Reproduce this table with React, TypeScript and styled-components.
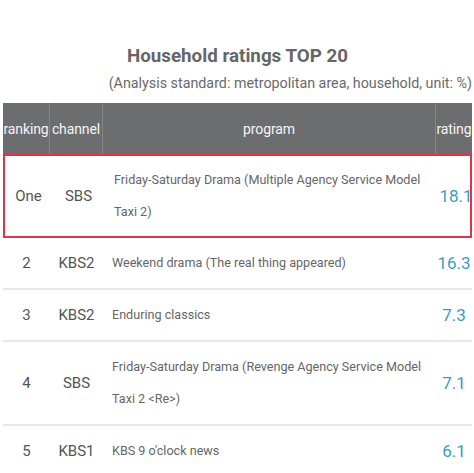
import React from "react";
import styled, { createGlobalStyle } from "styled-components";

const Global = createGlobalStyle`
  html, body { margin: 0; padding: 0; background: #ffffff; }
  body { font-family: Roboto, "Noto Sans", "Liberation Sans", sans-serif; }
`;

const Page = styled.div`
  width: 474px;
  height: 473px;
  overflow: hidden;
  display: flex;
  flex-direction: column;
  align-items: stretch;
  padding: 0 2px 0 3px;
  box-sizing: border-box;
`;

const Title = styled.h2`
  margin: 45px 0 0 0;
  font-size: 18.8px;
  font-weight: 700;
  color: #666666;
  text-align: center;
  line-height: 22px;
`;

const Subtitle = styled.div`
  margin-top: 6px;
  font-size: 14.3px;
  color: #6a6a6a;
  text-align: right;
  line-height: 20px;
  white-space: nowrap;
`;

const Table = styled.div`
  margin-top: 10px;
  display: flex;
  flex-direction: column;
`;

const cols = "47px 53px 333px 36px";

const HeaderRow = styled.div`
  display: grid;
  grid-template-columns: ${cols};
  height: 51px;
  background: #6c6d6f;
`;

const HeadCell = styled.div<{ $last?: boolean }>`
  display: flex;
  align-items: center;
  justify-content: center;
  color: #f4f4f4;
  font-size: 14px;
  white-space: nowrap;
  letter-spacing: -0.1px;
  overflow: visible;
  border-right: ${(p) => (p.$last ? "none" : "1px solid #858688")};
`;

const Row = styled.div<{ $highlight?: boolean }>`
  display: grid;
  grid-template-columns: ${cols};
  align-items: center;
  padding: ${(p) => (p.$highlight ? "8px 0" : "9px 0")};
  border: ${(p) => (p.$highlight ? "2px solid #d9364c" : "none")};
  border-bottom: ${(p) => (p.$highlight ? "2px solid #d9364c" : "2px solid #e8e8e8")};
  box-sizing: border-box;
`;

const Rank = styled.div`
  text-align: center;
  font-size: 15px;
  color: #555555;
`;

const Channel = styled.div`
  text-align: center;
  font-size: 15px;
  color: #555555;
`;

const Program = styled.div`
  padding-left: 9px;
  padding-right: 4px;
  font-size: 12.6px;
  line-height: 32px;
  color: #666666;
`;

const Rating = styled.div`
  text-align: center;
  font-size: 17px;
  color: #3a9cc0;
  white-space: nowrap;
`;

const rows = [
  { rank: "One", ch: "SBS", prog: "Friday-Saturday Drama (Multiple Agency Service Model Taxi 2)", rating: "18.1", hl: true },
  { rank: "2", ch: "KBS2", prog: "Weekend drama (The real thing appeared)", rating: "16.3" },
  { rank: "3", ch: "KBS2", prog: "Enduring classics", rating: "7.3" },
  { rank: "4", ch: "SBS", prog: "Friday-Saturday Drama (Revenge Agency Service Model Taxi 2 <Re>)", rating: "7.1" },
  { rank: "5", ch: "KBS1", prog: "KBS 9 o'clock news", rating: "6.1" },
];

export default function App() {
  return (
    <>
      <Global />
      <Page>
        <Title>Household ratings TOP 20</Title>
        <Subtitle>(Analysis standard: metropolitan area, household, unit: %)</Subtitle>
        <Table>
          <HeaderRow>
            <HeadCell>ranking</HeadCell>
            <HeadCell>channel</HeadCell>
            <HeadCell>program</HeadCell>
            <HeadCell $last>rating</HeadCell>
          </HeaderRow>
          {rows.map((r) => (
            <Row key={r.rank} $highlight={r.hl}>
              <Rank>{r.rank}</Rank>
              <Channel>{r.ch}</Channel>
              <Program>{r.prog}</Program>
              <Rating>{r.rating}</Rating>
            </Row>
          ))}
        </Table>
      </Page>
    </>
  );
}
